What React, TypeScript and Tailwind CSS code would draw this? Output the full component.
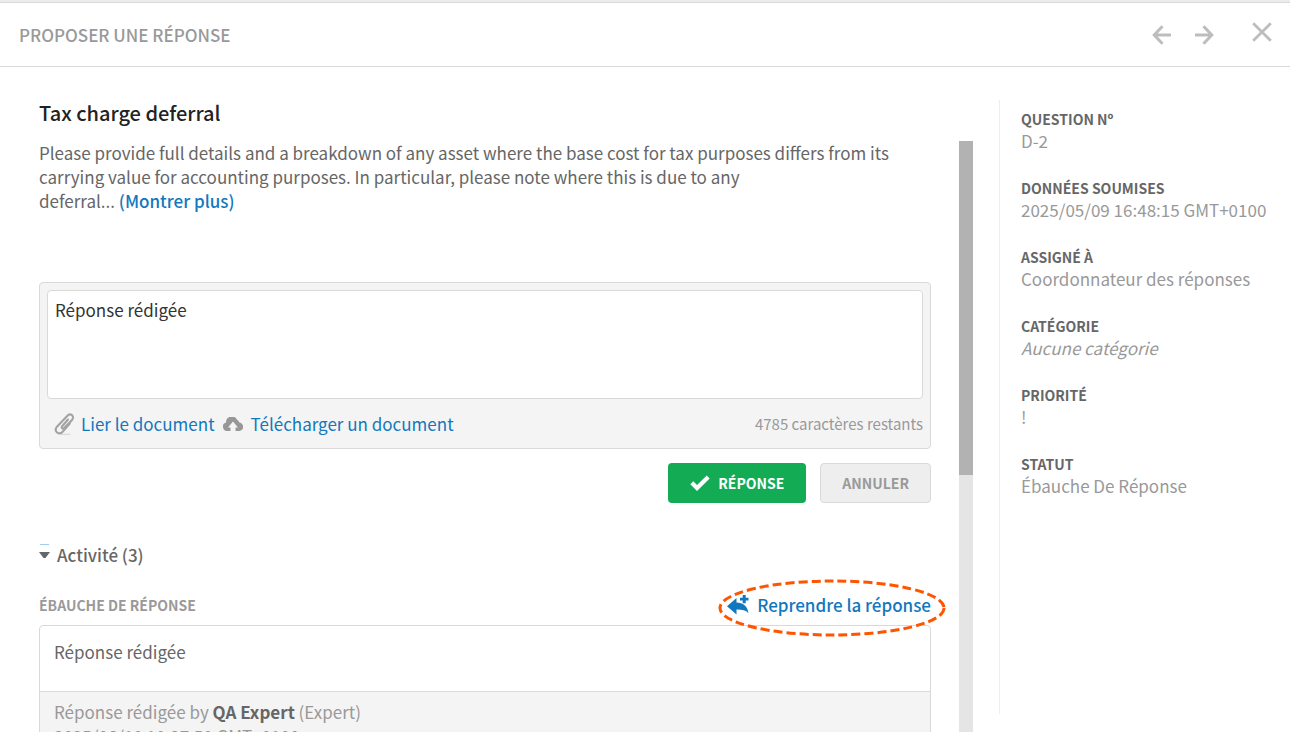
import { useState } from 'react';

const MAX_LENGTH = 4800;

const DETAILS = [
  { label: 'Question nº', value: 'D-2' },
  { label: 'Données soumises', value: '2025/05/09 16:48:15 GMT+0100' },
  { label: 'Assigné à', value: 'Coordonnateur des réponses' },
  { label: 'Catégorie', value: 'Aucune catégorie', empty: true },
  { label: 'Priorité', value: '!' },
  { label: 'Statut', value: 'Ébauche De Réponse' },
];

const ArrowIcon = ({ flip = false }: { flip?: boolean }) => (
  <svg
    width="20"
    height="20"
    viewBox="0 0 20 20"
    fill="none"
    stroke="#bdbdbd"
    strokeWidth="3"
    className={flip ? 'rotate-180' : ''}
  >
    <path d="M10.5 1.2 2.2 10l8.3 8.8M2 10h17" />
  </svg>
);

const CloseIcon = () => (
  <svg width="20" height="20" viewBox="0 0 20 20" fill="none" stroke="#bdbdbd" strokeWidth="2.8">
    <path d="M1.2 1.2l17.6 17.6M18.8 1.2 1.2 18.8" />
  </svg>
);

const ClipIcon = () => (
  <svg width="20" height="22" viewBox="0 0 20 22" fill="none" strokeLinecap="round">
    <path d="M7 21.3h9" stroke="#d4d4d4" strokeWidth="1" />
    <path
      d="M14 6.5 8.2 13.2c-1.3 1.7.6 3.3 2 1.8L18 7c1.7-2.2 1-4.4-.6-5.2-1.4-.7-2.9-.3-4.2 1.2L3.2 13.4c-2 2.3-1.7 4.7-.1 6.1 1.7 1.3 4 1 5.700-.9l7-8"
      stroke="#a3a3a3"
      strokeWidth="2.1"
    />
  </svg>
);

const CloudIcon = () => (
  <svg width="20" height="14" viewBox="0 0 20 14" fill="#979797">
    <path d="M4.5 14A4.4 4.4 0 0 1 3 5.4 5.8 5.8 0 0 1 14 2.8 4.6 4.6 0 0 1 16.4 5.6 4.2 4.2 0 0 1 15.5 14h-3v-3.5H15L10 4.6 5 10.5h2.5V14z" />
  </svg>
);

const CheckIcon = () => (
  <svg width="20" height="16" viewBox="0 0 20 16" fill="none" stroke="#fff" strokeWidth="4.2">
    <path d="M1.8 7.8 7 13 18.2 2" />
  </svg>
);

const ReplyPlusIcon = () => (
  <svg width="22" height="20" viewBox="0 0 22 20" fill="#1278bd">
    <path d="M0 11.200 9.500 3v4.600c6.500.2 11.200 3.600 11.900 10.600-2.800-3-6.600-3.700-11.900-3.600v4.800z" />
    <path d="M15.700 0h3v2.700h2.800v2.800h-2.800v2.700h-3V5.500H13V2.700h2.700z" />
  </svg>
);

const App = () => {
  const [answer, setAnswer] = useState('Réponse rédigée');
  const [open, setOpen] = useState(true);

  return (
    <div className="flex h-screen flex-col bg-white pb-[18px] font-['Noto_Sans_CJK_SC',sans-serif] text-[17px] leading-6 text-[#666]">
      <div className="h-[3px] shrink-0 border-b border-[#d9d9d9] bg-[#ececec]" />

      {/* Header */}
      <header className="flex h-16 shrink-0 items-center justify-between border-b border-[#d9d9d9] pr-[18px] pl-[19px]">
        <h1 className="font-medium text-[#999]">PROPOSER UNE RÉPONSE</h1>
        <div className="flex items-center">
          <button type="button" aria-label="Précédent">
            <ArrowIcon />
          </button>
          <button type="button" aria-label="Suivant" className="ml-[22px]">
            <ArrowIcon flip />
          </button>
          <button type="button" aria-label="Fermer" className="mb-1.5 ml-[38px]">
            <CloseIcon />
          </button>
        </div>
      </header>

      <div className="flex min-h-0 flex-1">
        {/* Question and answer */}
        <main className="flex min-w-0 flex-1 flex-col pr-[26px] pl-[39px]">
          <h2 className="mt-8 shrink-0 text-[20px] leading-7 font-medium text-[#222]">Tax charge deferral</h2>

          <div className="mt-3.5 flex min-h-0 flex-1 gap-7">
            <div className="min-w-0 flex-1 overflow-hidden">
              <p>
                Please provide full details and a breakdown of any asset where the base cost for tax purposes differs
                from its carrying value for accounting purposes. In particular, please note where this is due to any
                <br />
                deferral...{' '}
                <a href="#plus" className="font-medium text-[#1278bd]">
                  (Montrer plus)
                </a>
              </p>

              <div className="mt-[69px] rounded border border-[#d9d9d9] bg-[#f4f4f4] p-[7px]">
                <textarea
                  aria-label="Réponse"
                  value={answer}
                  maxLength={MAX_LENGTH}
                  onChange={(e) => setAnswer(e.target.value)}
                  className="block h-[109px] w-full resize-none rounded border border-[#d9d9d9] bg-white p-[7px] text-[#333] outline-none"
                />
                <div className="flex h-[42px] items-center pt-2 pl-[7px]">
                  <a href="#lier" className="flex items-center gap-[7px] text-[#1278bd]">
                    <ClipIcon />
                    Lier le document
                  </a>
                  <a href="#telecharger" className="ml-2 flex items-center gap-2 text-[#1278bd]">
                    <CloudIcon />
                    Télécharger un document
                  </a>
                  <span className="ml-auto text-[15px] text-[#999]">{MAX_LENGTH - answer.length} caractères restants</span>
                </div>
              </div>

              <div className="mt-3.5 flex justify-end gap-3.5">
                <button
                  type="button"
                  className="flex h-10 items-center gap-2 rounded bg-[#14ab55] px-[22px] text-[14px] font-bold text-white"
                >
                  <CheckIcon />
                  RÉPONSE
                </button>
                <button
                  type="button"
                  className="h-10 rounded border border-[#d9d9d9] bg-[#eee] px-[21px] text-[14px] font-bold text-[#999]"
                >
                  ANNULER
                </button>
              </div>

              {/* Activity */}
              <button
                type="button"
                aria-expanded={open}
                onClick={() => setOpen(!open)}
                className="mt-10 flex items-center gap-[7px] font-medium"
              >
                <svg width="11" height="24" viewBox="0 0 11 24">
                  <path d="M1 1.5h9" stroke="#a5cce8" />
                  <path d="M0 9h11l-4.500 6h-2z" fill="#666" />
                </svg>
                Activité (3)
              </button>

              {open && (
                <section className="mt-[26px]">
                  <div className="flex items-center justify-between">
                    <h3 className="text-[14px] font-bold text-[#999]">ÉBAUCHE DE RÉPONSE</h3>
                    <a href="#reprendre" className="flex items-center gap-2 font-medium text-[#1278bd]">
                      <ReplyPlusIcon />
                      Reprendre la réponse
                    </a>
                  </div>
                  <div className="mt-2 rounded border border-[#d9d9d9]">
                    <p className="h-[65px] px-3.5 pt-3.5">{answer}</p>
                    <div className="border-t border-[#d9d9d9] bg-[#f4f4f4] px-3.5 py-2 text-[#999]">
                      <p>
                        Réponse rédigée by <b className="font-bold text-[#666]">QA Expert</b> (Expert)
                      </p>
                      <p>2025/06/10 10:37:50 GMT+0100</p>
                    </div>
                  </div>
                </section>
              )}
            </div>

            {/* Scrollbar */}
            <div className="w-3.5 shrink-0 bg-[#e5e5e5]">
              <div className="h-[334px] bg-[#b2b2b2]" />
            </div>
          </div>
        </main>

        {/* Details */}
        <aside className="mt-[33px] mb-[18px] w-[291px] shrink-0 border-l border-[#eee] pl-[21px]">
          <dl className="mt-[9px] flex flex-col gap-[26px]">
            {DETAILS.map((item) => (
              <div key={item.label}>
                <dt className="text-[14px] leading-[21px] font-bold uppercase">{item.label}</dt>
                <dd className={item.empty ? 'leading-[22px] text-[#999] italic' : 'leading-[22px] text-[#999]'}>
                  {item.value}
                </dd>
              </div>
            ))}
          </dl>
        </aside>
      </div>

      {/* Dashed ring round the reuse link */}
      <svg
        width="230"
        height="60"
        viewBox="0 0 230 60"
        fill="none"
        className="pointer-events-none absolute top-[577px] right-[342px]"
      >
        <ellipse cx="114" cy="31" rx="112" ry="27" stroke="#ff5500" strokeWidth="3" strokeDasharray="9 4" />
      </svg>
    </div>
  );
};

export default App;
